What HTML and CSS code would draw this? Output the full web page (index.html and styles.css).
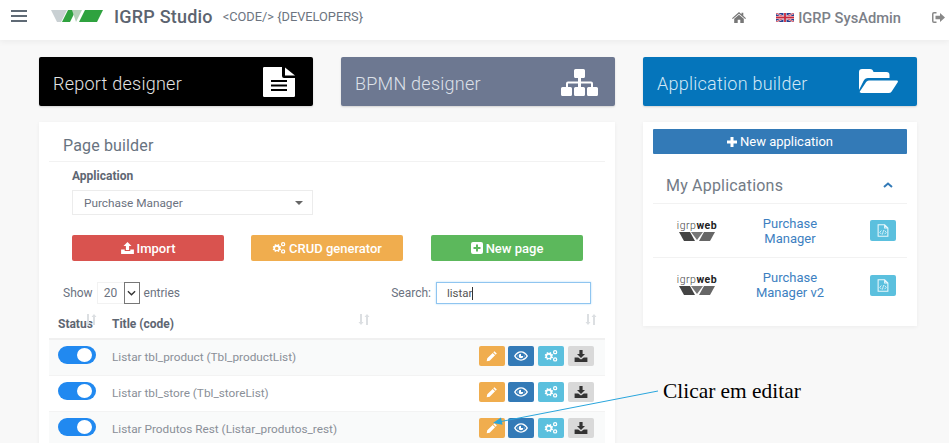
FILE: index.html
```html
<!DOCTYPE html>
<html lang="en">
<head>
<meta charset="utf-8">
<title>IGRP Studio</title>
<link rel="stylesheet" href="styles.css">
</head>
<body>
<svg class="defs" width="0" height="0" aria-hidden="true">
  <symbol id="i-pencil" viewBox="0 0 16 16"><path d="M11.2 1.6l3.2 3.2-1.5 1.5-3.2-3.2zM8.900 3.900l3.200 3.200-7.200 7.200-4 .8.8-4z"/></symbol>
  <symbol id="i-eye" viewBox="0 0 18 12"><path fill-rule="evenodd" d="M9 0c3.800 0 7 2.400 9 6-2 3.600-5.200 6-9 6s-7-2.400-9-6c2-3.600 5.200-6 9-6zM9 1.600a4.400 4.400 0 1 0 0 8.800 4.400 4.400 0 0 0 0-8.800zM2 6c.9 1.300 2 2.400 3.300 3.200A5.500 5.500 0 0 1 5.300 2.800C4 3.600 2.900 4.700 2 6zm14 0c-.9-1.300-2-2.400-3.300-3.200a5.500 5.500 0 0 1 0 6.400C14 8.400 15.100 7.300 16 6z"/><path d="M9 3a3 3 0 1 0 3 3H9z"/></symbol>
  <symbol id="i-cogs" viewBox="0 0 18 16"><path fill-rule="evenodd" d="M6 3.500l1.300.3.800-1 1.400.8-.4 1.200.9.900 1.200-.3.600 1.500-1.100.6v1.300l1.100.7-.6 1.400-1.200-.3-.9.900.3 1.200-1.400.6-.7-1.100H5.100l-.7 1.100-1.400-.6.3-1.200-.9-.9-1.200.3-.6-1.400 1.100-.7V7.500L.6 6.900l.6-1.500 1.200.3.900-.9L3 3.600l1.400-.8.7 1zM6 6.200a2.300 2.300 0 1 0 0 4.600 2.300 2.300 0 0 0 0-4.600z"/><path fill-rule="evenodd" d="M14.500 0a2.900 2.900 0 1 1 0 5.800 2.900 2.900 0 0 1 0-5.800zm0 1.700a1.200 1.200 0 1 0 0 2.400 1.200 1.200 0 0 0 0-2.400zM14.500 9.600a2.900 2.900 0 1 1 0 5.800 2.900 2.900 0 0 1 0-5.800zm0 1.700a1.200 1.200 0 1 0 0 2.400 1.200 1.200 0 0 0 0-2.400z"/></symbol>
  <symbol id="i-download" viewBox="0 0 16 15"><path d="M6 0h4v5h3L8 10 3 5h3zM0 9.500h4.500L8 12l3.500-2.500H16V15H0z"/></symbol>
  <symbol id="i-upload" viewBox="0 0 16 15"><path d="M8 0l5 5h-3v5H6V5H3zM0 9.500h4.500v1.700h7V9.500H16V15H0z"/></symbol>
  <symbol id="i-filecode" viewBox="0 0 14 16"><path fill="none" stroke="currentColor" stroke-width="1.300" d="M1 1h8l4 4v10H1zM9 1v4h4"/><path fill="none" stroke="currentColor" stroke-width="1" d="M5 8L3 10.300 5 12.500M9 8l2 2.300-2 2.200M7.800 7.500l-1.600 5.500"/></symbol>
  <symbol id="i-sort" viewBox="0 0 12 11"><path d="M3 11L.5 8H2V0h2v8h1.500zM9 0l2.500 3H10v8H8V3H6.500z"/></symbol>
</svg>

<header class="topbar">
  <div class="brand">
    <button class="burger" aria-label="Menu"><span></span><span></span><span></span></button>
    <svg class="logo" viewBox="0 0 52 12" aria-hidden="true">
      <path d="M0 0h16l-6 12H6z" fill="#c9d0d3"/>
      <path d="M11 12L17 0h4l4 0-6 12z" fill="#2fa23f"/>
      <path d="M21 0h10l-6 12z" fill="#b5d0b9"/>
      <path d="M28 12l6-12h18l-6 12z" fill="#2fa23f"/>
    </svg>
    <span class="brand-name">IGRP Studio</span>
    <span class="brand-tag">&lt;CODE/&gt; {DEVELOPERS}</span>
  </div>
  <nav class="userbar">
    <svg class="home" viewBox="0 0 14 11" aria-hidden="true"><path d="M7 0l2.500 2.200V.8h1.800v3L14 6.200l-.8.900L7 1.700.8 7.100 0 6.200zM2.200 6.800L7 2.700l4.800 4.100V11H8.300V7.800H5.700V11H2.200z"/></svg>
    <span class="user">
      <svg class="flag" viewBox="0 0 60 30" aria-hidden="true"><rect width="60" height="30" fill="#2a3f8f"/><path d="M0 0l60 30M60 0L0 30" stroke="#fff" stroke-width="6"/><path d="M0 0l60 30M60 0L0 30" stroke="#c8283c" stroke-width="3"/><path d="M30 0v30M0 15h60" stroke="#fff" stroke-width="10"/><path d="M30 0v30M0 15h60" stroke="#c8283c" stroke-width="6"/></svg>
      IGRP SysAdmin
    </span>
    <svg class="signout" viewBox="0 0 13 11" aria-hidden="true"><path d="M4.500 0v1.500H2A.5.500 0 0 0 1.500 2v7a.5.500 0 0 0 .5.500h2.500V11H2a2 2 0 0 1-2-2V2a2 2 0 0 1 2-2z"/><path d="M8 1l5 4.500L8 10V7.300H3.500V3.700H8z"/></svg>
  </nav>
</header>

<main class="grid">
  <a class="tile tile-black">
    <span>Report designer</span>
    <svg class="tile-icon doc" viewBox="0 0 32 30" preserveAspectRatio="none" aria-hidden="true"><path fill-rule="evenodd" d="M0 1.200A1.200 1.200 0 0 1 1.200 0H19v9a2 2 0 0 0 2 2h11v17.800a1.200 1.200 0 0 1-1.200 1.200H1.200A1.200 1.200 0 0 1 0 28.800zM8 13v2h16v-2zm0 4.500v2h16v-2zm0 4.500v2h16v-2z"/><path d="M22 .5l10 8H22z"/></svg>
  </a>
  <a class="tile tile-slate">
    <span>BPMN designer</span>
    <svg class="tile-icon map" viewBox="0 0 37 27" aria-hidden="true"><path d="M13 1.500A1.500 1.500 0 0 1 14.500 0h8A1.500 1.500 0 0 1 24 1.500v6A1.500 1.500 0 0 1 22.500 9H20v3.500h10a2 2 0 0 1 2 2V18h3.500a1.500 1.500 0 0 1 1.500 1.500v6a1.500 1.500 0 0 1-1.500 1.500h-8a1.500 1.500 0 0 1-1.500-1.500v-6a1.500 1.500 0 0 1 1.500-1.500H30v-3.500H20V18h2.500a1.500 1.500 0 0 1 1.500 1.500v6a1.500 1.500 0 0 1-1.500 1.500h-8a1.500 1.500 0 0 1-1.500-1.500v-6a1.500 1.500 0 0 1 1.500-1.500H17v-3.500H7V18h2.500a1.500 1.500 0 0 1 1.500 1.500v6A1.500 1.500 0 0 1 9.500 27h-8A1.500 1.500 0 0 1 0 25.500v-6A1.500 1.500 0 0 1 1.500 18H5v-3.500a2 2 0 0 1 2-2h10V9h-2.500A1.500 1.500 0 0 1 13 7.500z"/></svg>
  </a>
  <a class="tile tile-blue">
    <span>Application builder</span>
    <svg class="tile-icon folder" viewBox="0 0 39 24" aria-hidden="true"><path d="M0 3a3 3 0 0 1 3-3h8c2 0 3 1 3.500 3h13a3 3 0 0 1 3 3v3H9c-2 0-3.500 1-4.500 3L0 21z"/><path d="M10 11.500h27.500c1.200 0 1.800.8 1.200 1.700L33 22c-.7 1-1.500 2-3 2H2c-1.200 0-1.600-.8-1-1.700L6.500 14c.8-1.500 2-2.500 3.500-2.500z"/></svg>
  </a>

  <section class="panel builder">
    <h2 class="panel-title">Page builder</h2>
    <div class="builder-body">
      <label class="field-label">Application</label>
      <div class="fake-select"><span>Purchase Manager</span><i class="caret"></i></div>
      <div class="actions">
        <button class="btn btn-red"><svg class="ico ico-upload"><use href="#i-upload"/></svg>Import</button>
        <button class="btn btn-amber"><svg class="ico ico-cogs"><use href="#i-cogs"/></svg>CRUD generator</button>
        <button class="btn btn-green"><svg class="ico ico-plus" viewBox="0 0 12 12"><path fill-rule="evenodd" d="M2 0h8a2 2 0 0 1 2 2v8a2 2 0 0 1-2 2H2a2 2 0 0 1-2-2V2a2 2 0 0 1 2-2zm3 2.500V5H2.500v2H5v2.500h2V7h2.500V5H7V2.500z"/></svg>New page</button>
      </div>
    </div>
    <div class="table-tools">
      <div class="entries">Show <span class="num-select"><span class="num">20</span><span class="num-arrow"><svg viewBox="0 0 10 6"><path d="M1 1l4 4 4-4" fill="none" stroke="#333" stroke-width="1.500"/></svg></span></span> entries</div>
      <div class="search">Search: <span class="search-input">listar<i class="cursor"></i></span></div>
    </div>
    <table class="pages">
      <thead>
        <tr>
          <th class="c-status">Status<svg class="sort sort-a"><use href="#i-sort"/></svg></th>
          <th class="c-title">Title (code)<svg class="sort sort-b"><use href="#i-sort"/></svg></th>
          <th class="c-act"><svg class="sort sort-c"><use href="#i-sort"/></svg></th>
        </tr>
      </thead>
      <tbody>
        <tr>
          <td class="c-status"><span class="switch"></span></td>
          <td class="c-title">Listar tbl_product (Tbl_productList)</td>
          <td class="c-act"><div class="row-actions">
            <button class="mini m-amber" aria-label="Edit"><svg><use href="#i-pencil"/></svg></button>
            <button class="mini m-blue" aria-label="View"><svg class="w"><use href="#i-eye"/></svg></button>
            <button class="mini m-cyan" aria-label="CRUD"><svg class="w"><use href="#i-cogs"/></svg></button>
            <button class="mini m-grey" aria-label="Export"><svg><use href="#i-download"/></svg></button>
          </div></td>
        </tr>
        <tr>
          <td class="c-status"><span class="switch"></span></td>
          <td class="c-title">Listar tbl_store (Tbl_storeList)</td>
          <td class="c-act"><div class="row-actions">
            <button class="mini m-amber" aria-label="Edit"><svg><use href="#i-pencil"/></svg></button>
            <button class="mini m-blue" aria-label="View"><svg class="w"><use href="#i-eye"/></svg></button>
            <button class="mini m-cyan" aria-label="CRUD"><svg class="w"><use href="#i-cogs"/></svg></button>
            <button class="mini m-grey" aria-label="Export"><svg><use href="#i-download"/></svg></button>
          </div></td>
        </tr>
        <tr>
          <td class="c-status"><span class="switch"></span></td>
          <td class="c-title">Listar Produtos Rest (Listar_produtos_rest)</td>
          <td class="c-act"><div class="row-actions">
            <button class="mini m-amber" aria-label="Edit"><svg><use href="#i-pencil"/></svg></button>
            <button class="mini m-blue" aria-label="View"><svg class="w"><use href="#i-eye"/></svg></button>
            <button class="mini m-cyan" aria-label="CRUD"><svg class="w"><use href="#i-cogs"/></svg></button>
            <button class="mini m-grey" aria-label="Export"><svg><use href="#i-download"/></svg></button>
          </div></td>
        </tr>
      </tbody>
    </table>
  </section>

  <aside class="panel apps">
    <button class="btn-new"><svg class="ico-new" viewBox="0 0 10 10"><path d="M3.500 0h3v3.500H10v3H6.500V10h-3V6.500H0v-3h3.500z"/></svg>New application</button>
    <div class="apps-head">
      <h3>My Applications</h3>
      <svg class="chev" viewBox="0 0 10 6"><path d="M1 5l4-3.500L9 5" fill="none" stroke="#337ab7" stroke-width="2"/></svg>
    </div>
    <div class="app-row">
      <div class="app-logo"><span class="app-word">igrp<b>web</b></span><svg viewBox="0 0 36 9"><path d="M0 0h11l5 9H5z" fill="#444"/><path d="M12 0h12l-6 8z" fill="#777"/><path d="M25 0h11l-5 9h-11z" fill="#666"/></svg></div>
      <a class="app-name">Purchase<br>Manager</a>
      <span class="app-btn"><svg><use href="#i-filecode"/></svg></span>
    </div>
    <div class="app-row">
      <div class="app-logo"><span class="app-word">igrp<b>web</b></span><svg viewBox="0 0 36 9"><path d="M0 0h11l5 9H5z" fill="#444"/><path d="M12 0h12l-6 8z" fill="#777"/><path d="M25 0h11l-5 9h-11z" fill="#666"/></svg></div>
      <a class="app-name">Purchase<br>Manager v2</a>
      <span class="app-btn"><svg><use href="#i-filecode"/></svg></span>
    </div>
  </aside>
</main>

<div class="note">
  <svg class="note-line" viewBox="0 0 170 40" aria-hidden="true"><path d="M168 3L11 33.500" stroke="#29a5dc" stroke-width="1" fill="none"/><path d="M3 35l8-5.500 1.500 7.200z" fill="#29a5dc"/></svg>
  <span class="note-text">Clicar em editar</span>
</div>
</body>
</html>
```
FILE: styles.css
```css
* { box-sizing: border-box; }
html, body { height: 100%; }
body {
  margin: 0;
  position: relative;
  overflow: hidden;
  background: #f8f8f8;
  font-family: Roboto, "Liberation Sans", sans-serif;
  color: #666;
}
button { font-family: inherit; border: 0; padding: 0; }
.defs { position: absolute; }

.topbar {
  height: 40px;
  background: #fff;
  display: flex;
  justify-content: space-between;
  box-shadow: 0 2px 6px rgba(0,0,0,.05);
}
.brand { display: flex; align-items: center; padding-left: 11px; height: 32px; }
.burger { width: 16px; background: none; display: flex; flex-direction: column; gap: 3px; margin-right: 24px; }
.burger span { display: block; height: 2px; background: #5f6a75; }
.logo { width: 52px; height: 12px; margin-right: 11px; }
.brand-name { font-size: 18px; font-weight: 500; color: #5c6470; letter-spacing: .2px; margin-right: 10px; }
.brand-tag { font-size: 12.800px; color: #6c7480; }
.userbar { display: flex; align-items: center; height: 35px; }
.home { width: 14px; height: 11px; fill: #777; margin-right: 30px; }
.user { display: flex; align-items: center; font-size: 14.700px; font-weight: 500; color: #7c8088; margin-right: 31px; }
.flag { width: 18px; height: 9px; margin-right: 4px; }
.signout { width: 13px; height: 11px; fill: #888; margin-right: 4px; }

.grid {
  display: grid;
  grid-template-columns: 274px 274px 274px;
  grid-template-rows: 49px auto;
  column-gap: 28px;
  row-gap: 16px;
  padding: 17px 0 0 39px;
}
.tile {
  display: flex;
  align-items: center;
  justify-content: space-between;
  padding: 3px 14px 0;
  border-radius: 2px;
  font-size: 18px;
  font-weight: 300;
  letter-spacing: .25px;
  box-shadow: 0 1px 2px rgba(0,0,0,.15);
}
.tile-black { background: #000; color: #e4e4e4; }
.tile-slate { background: #6d7891; color: #dde1e9; }
.tile-blue { background: #0575bb; color: #d2e8f6; }
.tile-icon { fill: #fff; }
.doc { width: 32px; height: 30px; margin: -3px 4px 0 0; }
.map { width: 37px; height: 27px; margin: -1px 3px 0 0; }
.folder { width: 39px; height: 24px; margin: -4px 5px 0 0; }

.panel { background: #fff; box-shadow: 0 1px 4px rgba(0,0,0,.05); }
.builder { grid-column: 1 / 3; height: 330px; padding: 0 10px; }
.panel-title {
  margin: 0;
  height: 40px;
  padding: 14px 0 0 14px;
  font-size: 16px;
  font-weight: 400;
  letter-spacing: .15px;
  color: #687380;
  border-bottom: 1px solid #f2f2f2;
}
.builder-body { padding: 7px 0 0 23px; }
.field-label { display: block; font-size: 12px; font-weight: 700; color: #5e6672; line-height: 14px; margin-bottom: 7px; }
.fake-select {
  width: 241px;
  height: 25px;
  display: flex;
  align-items: center;
  justify-content: space-between;
  padding: 0 9px 0 11px;
  border: 1px solid #ececec;
  font-size: 11.800px;
  color: #6b7280;
}
.caret { width: 0; height: 0; border: 4px solid transparent; border-top-color: #666; border-bottom: 0; }
.actions { display: flex; gap: 27px; margin-top: 20px; }
.btn {
  width: 152px;
  height: 26px;
  display: flex;
  align-items: center;
  justify-content: center;
  gap: 3px;
  border-radius: 2px;
  color: #fff;
  font-size: 13px;
  font-weight: 500;
  fill: #fff;
}
.btn-red { background: #d9534f; }
.btn-amber { background: #f0ad4e; }
.btn-green { background: #5cb85c; margin-left: 1px; }
.ico { flex: none; }
.ico-upload { width: 13px; height: 12px; }
.ico-cogs { width: 14px; height: 12px; }
.ico-plus { width: 12px; height: 12px; }

.table-tools { display: flex; justify-content: space-between; align-items: center; margin-top: 21px; height: 22px; padding: 0 14px 0 14px; font-size: 12px; color: #6b7280; }
.entries { display: flex; align-items: center; gap: 4px; }
.num-select { display: flex; height: 22px; }
.num { width: 27px; border: 1px solid #f2f2f2; border-right: 0; display: flex; align-items: center; justify-content: center; font-size: 12px; }
.num-arrow { width: 16px; border: 1px solid #777; display: flex; align-items: center; justify-content: center; }
.num-arrow svg { width: 9px; height: 6px; }
.search { display: flex; align-items: center; gap: 5px; }
.search-input { width: 155px; height: 22px; display: flex; align-items: center; padding-left: 10px; border: 1px solid #8fc5f0; box-shadow: 0 0 2px #b7dcf7; font-size: 11.500px; color: #555; }
.cursor { width: 1px; height: 13px; background: #333; }

.pages { width: 556px; border-collapse: collapse; table-layout: fixed; font-size: 11.800px; }
.pages th { height: 35px; text-align: left; color: #5e6672; font-size: 12px; position: relative; border-bottom: 2px solid #f0f0f0; padding: 5px 0 0; font-weight: 700; }
.pages td { padding: 0; height: 36px; color: #8a8f98; border-bottom: 1px solid #f3f3f3; }
.pages tbody tr:nth-child(odd) { background: #f9fafa; }
.c-status { width: 63px; padding-left: 9px !important; }
.c-title { width: 345px; }
.c-act { width: 148px; }
.sort { position: absolute; top: 10px; width: 12px; height: 11px; fill: #dcdfe2; }
.sort-a { left: 36px; }
.sort-b { left: 246px; }
.sort-c { right: 8px; }
.switch { display: block; width: 38px; height: 18px; border-radius: 9px; background: #2189f0; position: relative; margin-top: -4px; }
.switch::after { content: ""; position: absolute; right: 4px; top: 2px; width: 15px; height: 14px; border-radius: 50%; background: #fff; }
.row-actions { display: flex; gap: 4px; justify-content: flex-end; padding-right: 11px; margin-top: -3px; }
.m-amber { margin-right: -1px; }
.mini { width: 26px; height: 20px; border-radius: 2px; display: flex; align-items: center; justify-content: center; }
.mini svg { width: 14px; height: 12px; fill: #fff; }
.m-amber { background: #f0ad4e; }
.m-blue { background: #337ab7; }
.m-cyan { background: #5bc0de; }
.m-grey { background: #d9d9d9; }
.m-grey svg { fill: #333; }

.apps { height: 204px; padding: 7px 10px 0; }
.btn-new { width: 254px; height: 25px; display: flex; align-items: center; justify-content: center; gap: 3px; background: #337ab7; color: #fff; font-size: 13px; border-radius: 1px; fill: #fff; }
.ico-new { width: 10px; height: 10px; }
.apps-head { display: flex; justify-content: space-between; align-items: center; height: 50px; padding: 13px 14px 0 13px; border-bottom: 1px solid #f2f2f2; }
.apps-head h3 { margin: 0; font-size: 16px; font-weight: 400; letter-spacing: .2px; color: #737b86; }
.chev { width: 10px; height: 6px; }
.app-row { display: grid; grid-template-columns: 91px 92px 71px; align-items: center; height: 54px; border-bottom: 1px solid #f2f2f2; }
.app-row:last-child { border-bottom: 0; }
.app-logo { width: 42px; margin-left: 23px; display: flex; flex-direction: column; align-items: center; }
.app-word { font-size: 10.500px; line-height: 10px; font-weight: 300; color: #444; letter-spacing: .5px; white-space: nowrap; }
.app-word b { color: #222; font-weight: 700; }
.app-logo svg { width: 36px; height: 9px; margin-top: 1px; }
.app-name { text-align: center; font-size: 13px; line-height: 15px; color: #3d7fc1; white-space: nowrap; }
.app-btn { justify-self: end; width: 26px; height: 21px; margin-right: 11px; border-radius: 2px; background: #5bc0de; display: flex; align-items: center; justify-content: center; color: #eaf7fc; }
.app-btn svg { width: 12px; height: 13px; }

.note-line { position: absolute; left: 490px; top: 388px; width: 170px; height: 40px; }
.note-text { position: absolute; left: 663px; top: 379px; font-family: "Liberation Serif", serif; font-size: 21.400px; line-height: 24px; color: #000; white-space: nowrap; }
```
